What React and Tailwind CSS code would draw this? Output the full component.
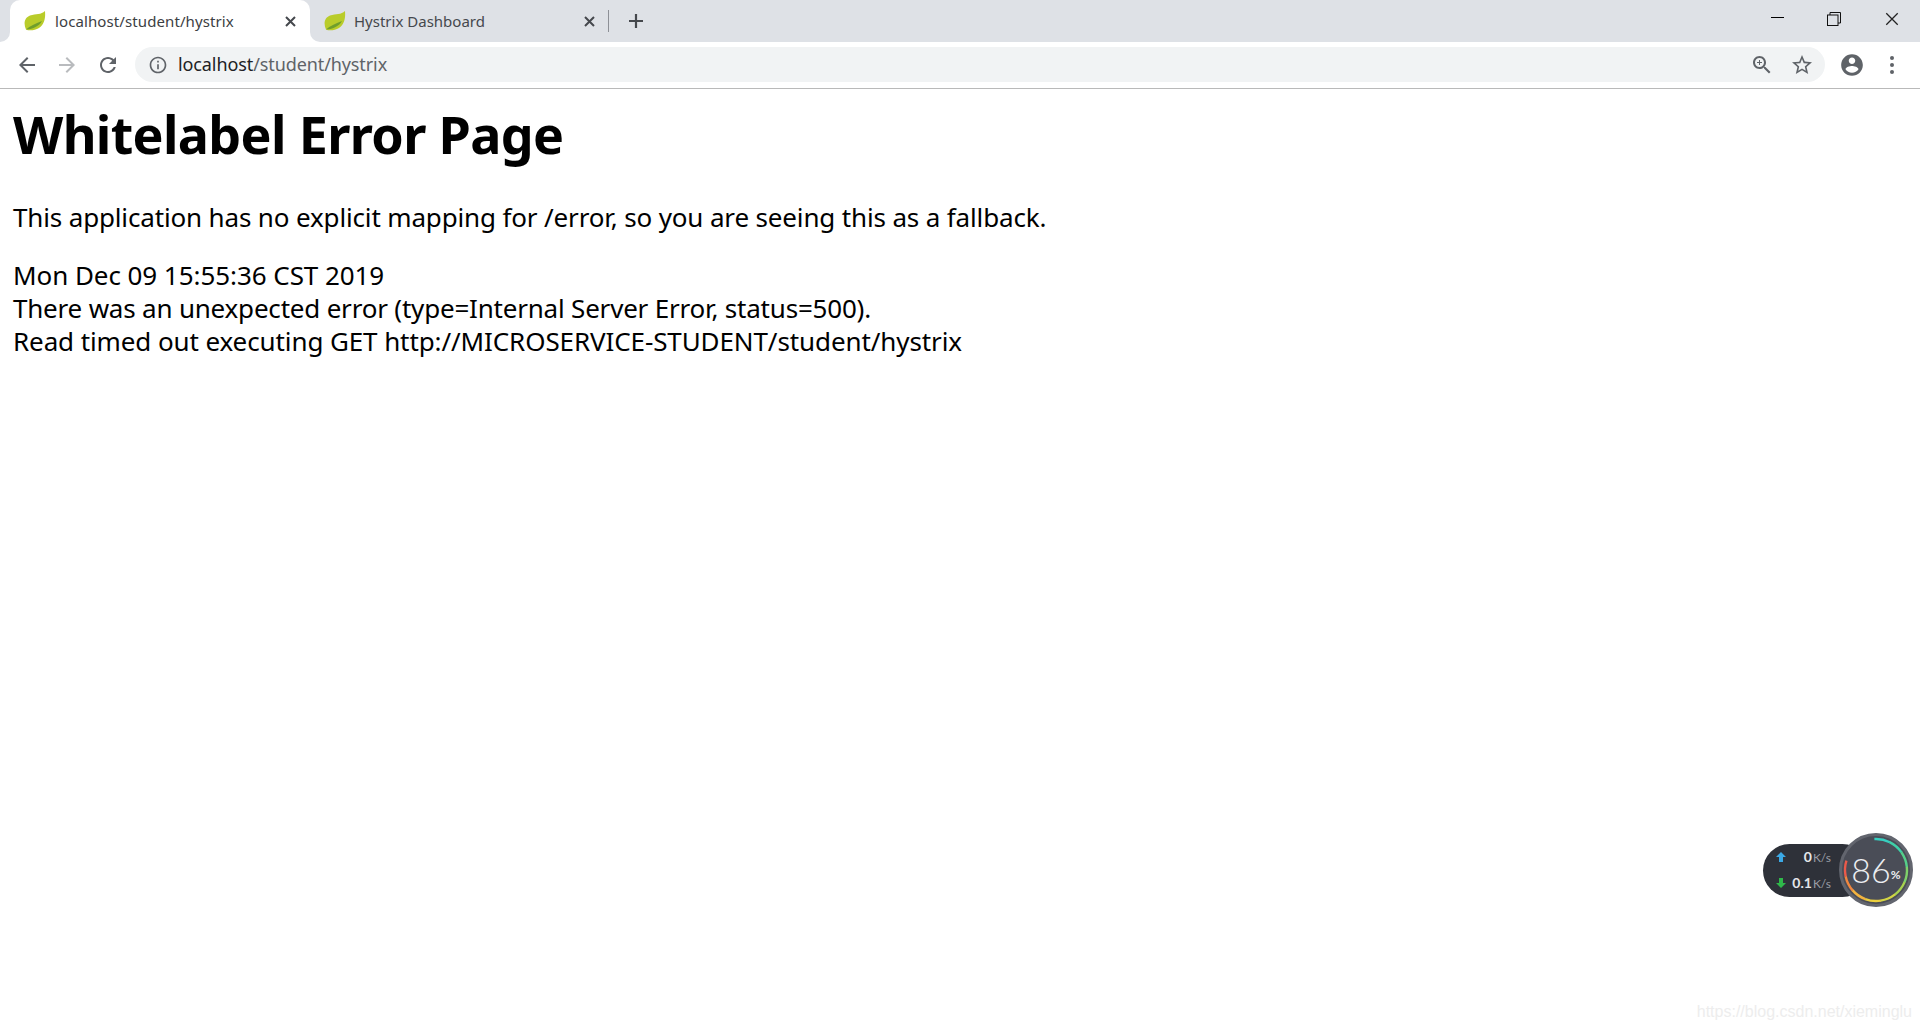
import React from 'react';

const uiFont = { fontFamily: '"Noto Sans", "Open Sans", sans-serif' };

// Spring leaf favicon
const Leaf = () => (
  <svg width="22" height="20" viewBox="0 0 22 20" className="shrink-0">
    <path d="M21 0C21.500 6 21 13 15 17C11 19.500 5 20 2 18.500C-0.500 13 0 7 6 4.500C12 2.500 17 4 21 0Z" fill="#b9cc2a" />
    <path d="M2 18.500C6 15 11 13 18 10C15 15.500 8 18.500 2 18.500Z" fill="#6f9e2c" />
  </svg>
);

const CloseX = ({ color = '#45484d', size = 11, width = 2 }) => (
  <svg width={size} height={size} viewBox="0 0 11 11">
    <path d="M1 1L10 10M10 1L1 10" stroke={color} strokeWidth={width} fill="none" />
  </svg>
);

const Icon = ({ d, size = 24, color = '#5f6368' }) => (
  <svg width={size} height={size} viewBox="0 0 24 24" fill={color}>
    <path d={d} />
  </svg>
);

const paths = {
  back: 'M20 11H7.830l5.590-5.590L12 4l-8 8 8 8 1.410-1.410L7.830 13H20v-2z',
  forward: 'M12 4l-1.410 1.410L16.170 11H4v2h12.170l-5.580 5.590L12 20l8-8z',
  reload: 'M17.650 6.350C16.200 4.900 14.210 4 12 4c-4.420 0-7.990 3.580-7.990 8s3.570 8 7.990 8c3.730 0 6.840-2.550 7.730-6h-2.080c-.82 2.330-3.040 4-5.650 4-3.310 0-6-2.690-6-6s2.690-6 6-6c1.660 0 3.140.69 4.220 1.780L13 11h7V4l-2.350 2.350z',
  info: 'M11 7h2v2h-2zm0 4h2v6h-2zm1-9C6.480 2 2 6.480 2 12s4.480 10 10 10 10-4.480 10-10S17.520 2 12 2zm0 18c-4.410 0-8-3.590-8-8s3.590-8 8-8 8 3.590 8 8-3.590 8-8 8z',
  zoom: 'M15.500 14h-.79l-.28-.27C15.410 12.590 16 11.110 16 9.500 16 5.910 13.090 3 9.500 3S3 5.910 3 9.500 5.910 16 9.500 16c1.610 0 3.090-.59 4.230-1.570l.27.28v.79l5 4.990L20.490 19l-4.990-5zm-6 0C7.010 14 5 11.990 5 9.500S7.010 5 9.500 5 14 7.010 14 9.500 11.990 14 9.500 14zM12 10h-2v2H9v-2H7V9h2V7h1v2h2v1z',
  star: 'M22 9.240l-7.190-.62L12 2 9.190 8.630 2 9.240l5.460 4.730L5.820 21 12 17.270 18.180 21l-1.630-7.030L22 9.240zM12 15.400l-3.760 2.270 1-4.280-3.320-2.880 4.380-.38L12 6.100l1.710 4.040 4.380.38-3.320 2.880 1 4.280L12 15.400z',
  account: 'M12 2C6.480 2 2 6.480 2 12s4.480 10 10 10 10-4.480 10-10S17.520 2 12 2zm0 3c1.660 0 3 1.340 3 3s-1.340 3-3 3-3-1.340-3-3 1.340-3 3-3zm0 14.200c-2.500 0-4.710-1.280-6-3.220.03-1.990 4-3.080 6-3.080 1.990 0 5.970 1.090 6 3.080-1.290 1.940-3.500 3.220-6 3.220z',
};

const TabStrip = () => (
  <div className="flex h-[42px] items-stretch bg-[#dee1e6] pl-[10px]" style={uiFont}>
    {/* Active tab */}
    <div className="relative flex w-[300px] items-center rounded-t-[10px] bg-white pl-[14px] pr-[14px]">
      <div className="absolute bottom-0 left-[-10px] size-[10px] bg-white">
        <div className="size-full rounded-br-[10px] bg-[#dee1e6]" />
      </div>
      <div className="absolute bottom-0 right-[-10px] size-[10px] bg-white">
        <div className="size-full rounded-bl-[10px] bg-[#dee1e6]" />
      </div>
      <Leaf />
      <span className="ml-[9px] flex-1 text-[15px] tracking-[0.1px] text-[#3c4043]">localhost/student/hystrix</span>
      <CloseX />
    </div>
    {/* Inactive tab */}
    <div className="flex w-[298px] items-center pl-[14px] pr-[13px]">
      <Leaf />
      <span className="ml-[8px] flex-1 text-[15px] text-[#45484d]">Hystrix Dashboard</span>
      <CloseX />
    </div>
    <div className="my-[10px] w-px bg-[#8d9096]" />
    <div className="ml-[19px] flex items-center">
      <svg width="16" height="16" viewBox="0 0 16 16">
        <path d="M8 1V15M1 8H15" stroke="#45484d" strokeWidth="2.200" />
      </svg>
    </div>
    {/* Window controls */}
    <div className="ml-auto flex items-start pt-[12px]">
      <div className="mr-[43px] mt-[5px] h-px w-[13px] bg-black" />
      <svg width="14" height="14" viewBox="0 0 14 14" className="mr-[44px]" fill="none" stroke="#111">
        <rect x="0.500" y="3" width="10.500" height="10.500" />
        <path d="M3 3V0.500H13.500V11H11" />
      </svg>
      <div className="mr-[21px]">
        <CloseX color="#222" size={14} width={1} />
      </div>
    </div>
  </div>
);

const Toolbar = () => (
  <div className="flex h-[47px] items-center border-b border-[#b9b9b9] bg-white pb-px pl-[15px]" style={uiFont}>
    <Icon d={paths.back} />
    <div className="ml-[16px]">
      <Icon d={paths.forward} color="#b9bbbe" />
    </div>
    <div className="ml-[17px]">
      <Icon d={paths.reload} />
    </div>
    <div className="ml-[15px] flex h-[35px] flex-1 items-center rounded-full bg-[#f1f3f4] pl-[13px] pr-[11px]">
      <Icon d={paths.info} size={20} />
      <span className="ml-[10px] flex-1 text-[18px] tracking-[-0.1px] text-[#5f6368]">
        <span className="text-[#202124]">localhost</span>/student/hystrix
      </span>
      <Icon d={paths.zoom} />
      <div className="ml-[16px]">
        <Icon d={paths.star} />
      </div>
    </div>
    <div className="ml-[14px]">
      <Icon d={paths.account} size={26} />
    </div>
    <div className="ml-[25px] mr-[26px] flex flex-col gap-[3px]">
      <div className="size-[4px] rounded-full bg-[#5f6368]" />
      <div className="size-[4px] rounded-full bg-[#5f6368]" />
      <div className="size-[4px] rounded-full bg-[#5f6368]" />
    </div>
  </div>
);

// Ring around the 86% reading, split into coloured pieces
const ringColors = ['#37cfc0', '#3fd0a8', '#55cf8a', '#7fd06a', '#a8d24f', '#d3d544', '#ecd03e', '#f2b33f', '#f0873f', '#ec5a4a'];

const arcPath = (from, to, r) => {
  const pt = (a) => [40 + r * Math.sin((a * Math.PI) / 180), 40 - r * Math.cos((a * Math.PI) / 180)];
  const [x1, y1] = pt(from);
  const [x2, y2] = pt(to);
  return `M${x1} ${y1}A${r} ${r} 0 0 1 ${x2} ${y2}`;
};

const SpeedWidget = () => (
  <div className="absolute left-[1763px] top-[833px] flex items-center" style={{ fontFamily: 'Lato, sans-serif' }}>
    <div className="mr-[-30px] flex h-[53px] w-[106px] flex-col justify-center rounded-full bg-[#2e3139] pl-[13px] pr-[38px] text-[#e4e6ea]">
      <div className="flex items-center justify-between">
        <svg width="10" height="10" viewBox="0 0 10 10"><path d="M5 0L10 5H7V10H3V5H0Z" fill="#3ba9e6" /></svg>
        <span className="text-[14px] font-bold leading-[25px]">0<span className="ml-[1px] text-[12px] font-normal text-[#9a9da5]">K/s</span></span>
      </div>
      <div className="flex items-center justify-between">
        <svg width="10" height="10" viewBox="0 0 10 10"><path d="M5 10L10 5H7V0H3V5H0Z" fill="#2fb84a" /></svg>
        <span className="text-[14px] font-bold leading-[25px]">0.1<span className="ml-[1px] text-[12px] font-normal text-[#9a9da5]">K/s</span></span>
      </div>
    </div>
    <div className="relative size-[74px] rounded-full border-[3px] border-[#62656e] bg-[#4a4d57]">
      <svg width="80" height="80" viewBox="0 0 80 80" className="absolute left-[-6px] top-[-6px]" fill="none">
        {ringColors.map((c, i) => (
          <path key={c} d={arcPath(i * 29 - 3, (i + 1) * 29 - 2.500, 31)} stroke={c} strokeWidth="2.400" />
        ))}
      </svg>
      <div className="flex h-full items-center justify-center text-[#eceef1]">
        <span className="text-[34px] font-light leading-none">86</span>
        <span className="mt-[9px] text-[12px] font-bold">%</span>
      </div>
    </div>
  </div>
);

export default function App() {
  return (
    <div className="relative h-screen overflow-hidden bg-white">
      <TabStrip />
      <Toolbar />
      <main className="pl-[13px] text-black" style={uiFont}>
        <h1 className="mt-[13px] text-[52px] font-bold leading-[64px] tracking-[-0.65px]">Whitelabel Error Page</h1>
        <p className="mt-[35px] text-[26px] leading-[33px] tracking-[-0.15px]">
          This application has no explicit mapping for /error, so you are seeing this as a fallback.
        </p>
        <div className="mt-[25px] text-[26px] leading-[33px]">
          <div className="tracking-[-0.06px]">Mon Dec 09 15:55:36 CST 2019</div>
          <div className="tracking-[-0.2px]">There was an unexpected error (type=Internal Server Error, status=500).</div>
          <div className="tracking-[-0.1px]">Read timed out executing GET http://MICROSERVICE-STUDENT/student/hystrix</div>
        </div>
      </main>
      <SpeedWidget />
      <div className="absolute bottom-[6px] right-[8px] text-[16px] text-[#ededed]" style={{ fontFamily: '"Liberation Sans", sans-serif' }}>
        https://blog.csdn.net/xieminglu
      </div>
    </div>
  );
}
